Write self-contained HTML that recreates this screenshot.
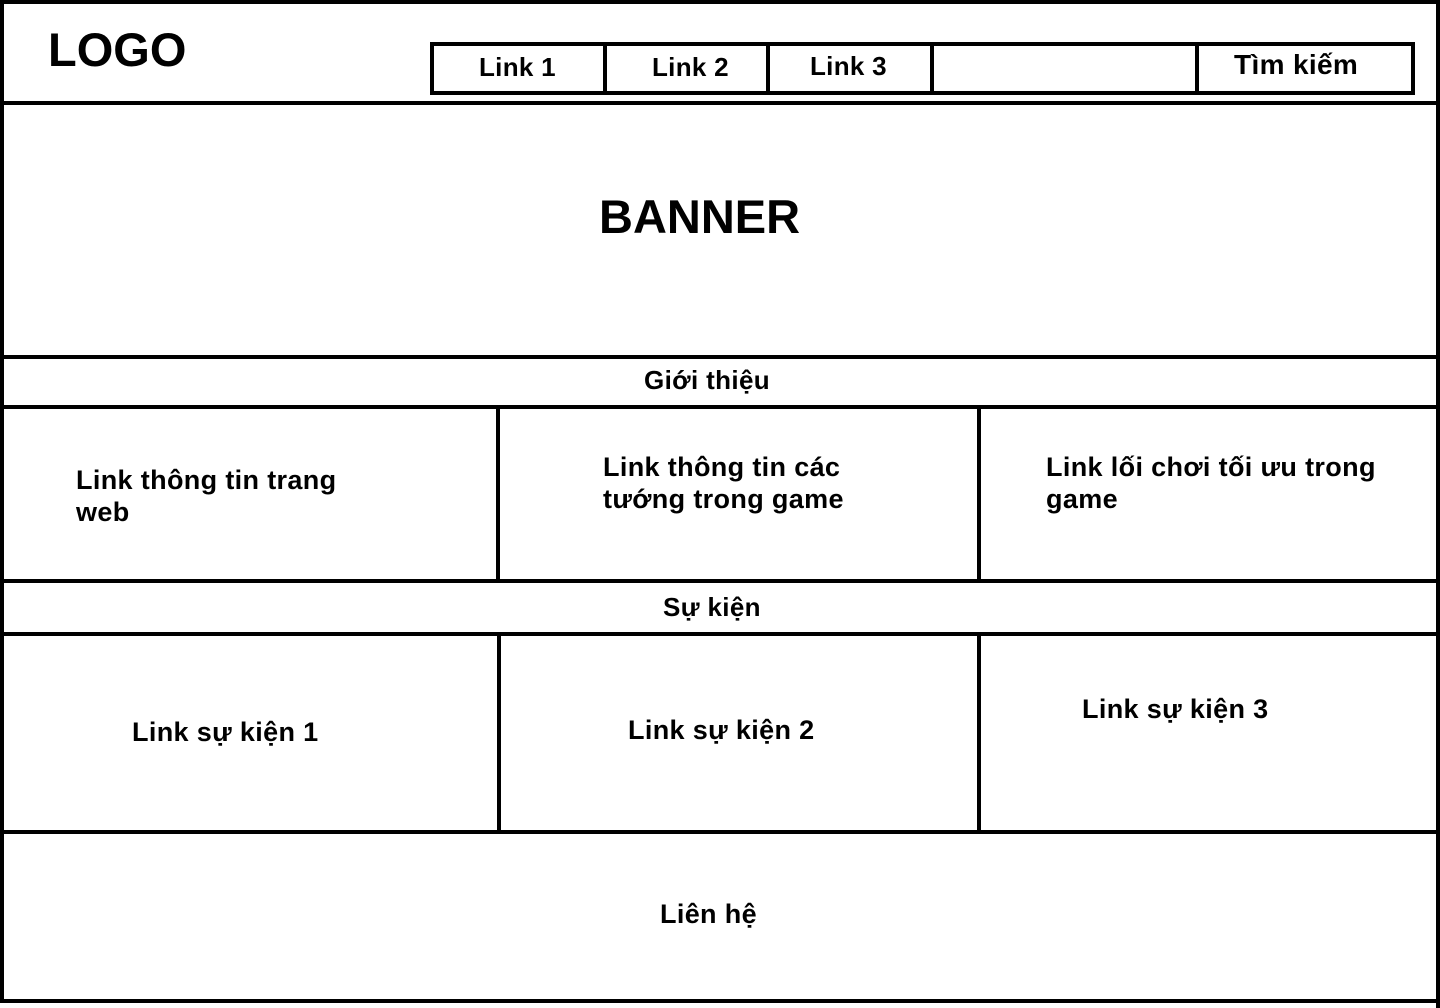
<!DOCTYPE html>
<html><head><meta charset="utf-8"><style>
html,body{margin:0;padding:0;background:#fff;}
body{width:1440px;height:1008px;position:relative;overflow:hidden;font-family:"Liberation Sans",Arial,sans-serif;font-weight:bold;color:#000;}
.h{position:absolute;background:#000;height:4px;}
.v{position:absolute;background:#000;width:4px;}
.t{position:absolute;white-space:nowrap;font-size:27px;line-height:32px;letter-spacing:0.35px;}
</style></head><body>
<div class="h" style="left:0;top:0;width:1440px;"></div>
<div class="v" style="left:0;top:0;height:1003px;"></div>
<div class="v" style="left:1436px;top:0;height:1008px;"></div>
<div class="h" style="left:0;top:101px;width:1440px;"></div>
<div class="h" style="left:0;top:355px;width:1440px;"></div>
<div class="h" style="left:0;top:405px;width:1440px;"></div>
<div class="h" style="left:0;top:579px;width:1440px;"></div>
<div class="h" style="left:0;top:632px;width:1440px;"></div>
<div class="h" style="left:0;top:830px;width:1440px;"></div>
<div class="h" style="left:0;top:999px;width:1440px;"></div>
<div class="v" style="left:496px;top:405px;height:178px;"></div>
<div class="v" style="left:977px;top:405px;height:178px;"></div>
<div class="v" style="left:497px;top:632px;height:202px;"></div>
<div class="v" style="left:977px;top:632px;height:202px;"></div>
<div style="position:absolute;left:430px;top:42px;width:977px;height:45px;border:4px solid #000;"></div>
<div class="v" style="left:603px;top:42px;height:53px;"></div>
<div class="v" style="left:766px;top:42px;height:53px;"></div>
<div class="v" style="left:930px;top:42px;height:53px;"></div>
<div class="v" style="left:1195px;top:42px;height:53px;"></div>
<div class="t" style="left:479px;top:51px;font-size:26px;letter-spacing:0.3px;">Link 1</div>
<div class="t" style="left:652px;top:51px;font-size:26px;letter-spacing:0.3px;">Link 2</div>
<div class="t" style="left:810px;top:50px;font-size:26px;letter-spacing:0.3px;">Link 3</div>
<div class="t" style="left:1234px;top:49px;font-size:28px;">Tìm kiếm</div>
<div class="t" style="left:48px;top:22px;font-size:47px;line-height:56px;letter-spacing:0;">LOGO</div>
<div class="t" style="left:599px;top:189px;font-size:47px;line-height:56px;letter-spacing:0;">BANNER</div>
<div class="t" style="left:644px;top:364px;font-size:26px;">Giới thiệu</div>
<div class="t" style="left:76px;top:464px;">Link thông tin trang<br>web</div>
<div class="t" style="left:603px;top:451px;">Link thông tin các<br>tướng trong game</div>
<div class="t" style="left:1046px;top:451px;">Link lối chơi tối ưu trong<br>game</div>
<div class="t" style="left:663px;top:591px;font-size:26px;">Sự kiện</div>
<div class="t" style="left:132px;top:716px;">Link sự kiện 1</div>
<div class="t" style="left:628px;top:714px;">Link sự kiện 2</div>
<div class="t" style="left:1082px;top:693px;">Link sự kiện 3</div>
<div class="t" style="left:660px;top:898px;">Liên hệ</div>
</body></html>
